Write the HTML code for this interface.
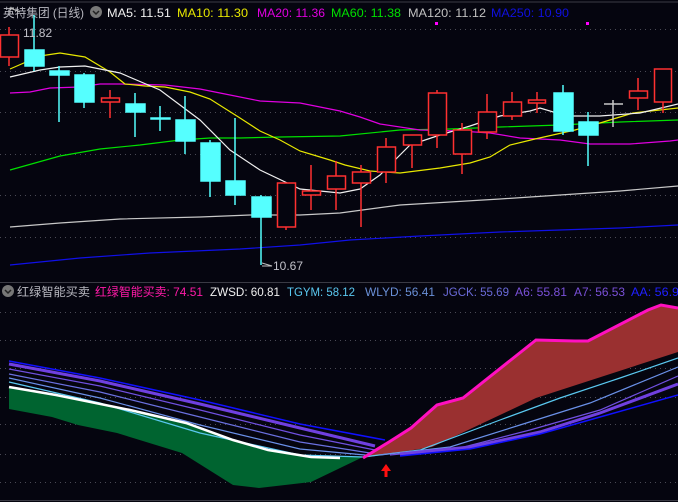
<!DOCTYPE html>
<html><head><meta charset="utf-8"><style>
html,body{margin:0;padding:0;background:#05050f;width:678px;height:502px;overflow:hidden}
svg{display:block}
text{font-family:"Liberation Sans","Noto Sans CJK SC",sans-serif;font-size:12px}
</style></head><body>
<svg width="678" height="502" viewBox="0 0 678 502" xmlns="http://www.w3.org/2000/svg">
<rect width="678" height="502" fill="#05050f"/>
<line x1="0" y1="2" x2="678" y2="2" stroke="#3a3a44" stroke-width="1"/>
<g stroke="#4a4a55" stroke-dasharray="1,4" stroke-width="1">
<line x1="0" y1="29.5" x2="678" y2="29.5"/><line x1="0" y1="71.5" x2="678" y2="71.5"/><line x1="0" y1="112.5" x2="678" y2="112.5"/><line x1="0" y1="154.5" x2="678" y2="154.5"/><line x1="0" y1="195.5" x2="678" y2="195.5"/><line x1="0" y1="237.5" x2="678" y2="237.5"/>
<line x1="0" y1="312.5" x2="678" y2="312.5"/><line x1="0" y1="340.5" x2="678" y2="340.5"/><line x1="0" y1="368.5" x2="678" y2="368.5"/><line x1="0" y1="397.5" x2="678" y2="397.5"/><line x1="0" y1="424.5" x2="678" y2="424.5"/><line x1="0" y1="454.5" x2="678" y2="454.5"/><line x1="0" y1="482.5" x2="678" y2="482.5"/>
</g>
<line x1="0" y1="282.5" x2="678" y2="282.5" stroke="#3a3a44"/>
<line x1="0" y1="500.5" x2="678" y2="500.5" stroke="#3a3a44"/>

<text x="3" y="17" fill="#b8b8c0" textLength="81" lengthAdjust="spacingAndGlyphs">英特集团 (日线)</text>
<circle cx="96" cy="12" r="6" fill="#777"/><path d="M93 11 L96 14 L99 11" stroke="#222" stroke-width="1.5" fill="none"/>
<text x="107" y="17" fill="#f0f0f0" textLength="64" lengthAdjust="spacingAndGlyphs">MA5: 11.51</text>
<text x="177" y="17" fill="#e8e800" textLength="71" lengthAdjust="spacingAndGlyphs">MA10: 11.30</text>
<text x="257" y="17" fill="#e000e0" textLength="68" lengthAdjust="spacingAndGlyphs">MA20: 11.36</text>
<text x="331" y="17" fill="#00e000" textLength="70" lengthAdjust="spacingAndGlyphs">MA60: 11.38</text>
<text x="408" y="17" fill="#c0c0c0" textLength="78" lengthAdjust="spacingAndGlyphs">MA120: 11.12</text>
<text x="491" y="17" fill="#1010e0" textLength="78" lengthAdjust="spacingAndGlyphs">MA250: 10.90</text>
<rect x="435" y="22" width="3" height="3" fill="#ff00ff"/><rect x="586" y="22" width="3" height="3" fill="#ff00ff"/>

<g fill="none" stroke-width="1.2">
<polyline stroke="#1010e8" points="10,265 80,258 150,253 240,249 300,245 350,240 420,236 500,232 560,230 620,228 678,225"/>
<polyline stroke="#c8c8c8" points="10,227 60,223 120,219 200,217 250,215 300,215 340,213 400,205 450,202 500,199 560,195 620,191 678,186"/>
<polyline stroke="#00e000" points="10,170 60,156 100,149 140,145 180,140 210,138 240,138 280,137 340,136 400,130 450,129 500,127 560,125 620,122 678,120"/>
<polyline stroke="#e000e0" points="10,93 30,92 50,88 80,87 100,84 120,84 165,85 200,89 220,93 260,101 300,103 340,111 360,117 380,124 420,130 460,131 490,133 520,138 560,140 590,144 630,144 670,141 678,140"/>
<polyline stroke="#e8e800" points="10,69 40,56 60,53 85,57 110,72 125,84 145,86 165,87 190,92 210,99 240,118 260,131 280,140 300,151 330,160 345,165 370,171 400,173 440,168 470,163 490,157 510,145 535,139 575,130 600,123 633,113 678,108"/>
<polyline stroke="#f0f0f0" points="10,77 40,70 60,67 85,66 120,73 160,90 200,120 230,150 260,170 300,189 340,193 360,189 380,175 410,145 440,135 470,126 500,116 530,111 540,108 560,114 570,116 600,116 640,113 678,104"/>
</g>

<g stroke="#ff3030" stroke-width="1.5" fill="#05050f">
<line x1="9" y1="27" x2="9" y2="66"/><rect x="0.5" y="35" width="18" height="22"/>
<line x1="110" y1="90" x2="110" y2="118"/><rect x="101.5" y="98" width="18" height="4"/>
<line x1="286" y1="183" x2="286" y2="230"/><rect x="277.5" y="183" width="18" height="44"/>
<line x1="311" y1="165" x2="311" y2="210"/><rect x="302.5" y="191" width="18" height="4"/>
<line x1="336" y1="161" x2="336" y2="210"/><rect x="327.5" y="176" width="18" height="13"/>
<line x1="361" y1="165" x2="361" y2="227"/><rect x="352.5" y="172" width="18" height="11"/>
<line x1="386" y1="138" x2="386" y2="183"/><rect x="377.5" y="147" width="18" height="25"/>
<line x1="412" y1="145" x2="412" y2="168"/><rect x="403.5" y="135" width="18" height="10"/>
<line x1="437" y1="90" x2="437" y2="148"/><rect x="428.5" y="93" width="18" height="42"/>
<line x1="462" y1="123" x2="462" y2="174"/><rect x="453.5" y="130" width="18" height="24"/>
<line x1="487" y1="94" x2="487" y2="139"/><rect x="478.5" y="112" width="18" height="20"/>
<line x1="512" y1="92" x2="512" y2="120"/><rect x="503.5" y="102" width="18" height="14"/>
<line x1="537" y1="92" x2="537" y2="113"/><rect x="528.5" y="100" width="17" height="3"/>
<line x1="638" y1="78" x2="638" y2="110"/><rect x="629.5" y="91" width="18" height="7"/>
<line x1="663" y1="69" x2="663" y2="113"/><rect x="654.5" y="69" width="17" height="33"/>
</g>
<g stroke="#55ffff" stroke-width="1.5" fill="#55ffff">
<line x1="34" y1="15" x2="34" y2="71"/><rect x="25" y="50" width="19" height="16"/>
<line x1="59" y1="66" x2="59" y2="122"/><rect x="50" y="71" width="19" height="4"/>
<line x1="84" y1="73" x2="84" y2="108"/><rect x="75" y="75" width="19" height="27"/>
<line x1="135" y1="93" x2="135" y2="137"/><rect x="126" y="104" width="19" height="8"/>
<line x1="160" y1="106" x2="160" y2="131"/><rect x="151" y="118" width="19" height="1"/>
<line x1="185" y1="96" x2="185" y2="154"/><rect x="176" y="120" width="19" height="21"/>
<line x1="210" y1="140" x2="210" y2="197"/><rect x="201" y="143" width="19" height="38"/>
<line x1="235" y1="118" x2="235" y2="205"/><rect x="226" y="181" width="19" height="14"/>
<line x1="261" y1="195" x2="261" y2="265"/><rect x="252" y="197" width="19" height="20"/>
<line x1="563" y1="85" x2="563" y2="135"/><rect x="554" y="93" width="19" height="38"/>
<line x1="588" y1="112" x2="588" y2="166"/><rect x="579" y="122" width="19" height="13"/>
</g>
<g stroke="#c8c8c8" stroke-width="1.5"><line x1="613" y1="100" x2="613" y2="127"/><line x1="604" y1="104" x2="623" y2="104"/></g>

<g stroke="#c0c0c0" fill="none" stroke-width="1"><path d="M10 14 L10 8 L14 8 M10 8 L20 12"/><path d="M262 263 L272 266 L262 266"/></g>
<text x="23" y="37" fill="#c0c0c8">11.82</text>
<text x="273" y="270" fill="#c0c0c8">10.67</text>

<circle cx="8" cy="291" r="6" fill="#777"/><path d="M5 290 L8 293 L11 290" stroke="#222" stroke-width="1.5" fill="none"/>
<text x="17" y="296" fill="#b8b8c0" textLength="73" lengthAdjust="spacingAndGlyphs">红绿智能买卖</text>
<text x="95" y="296" fill="#ff1aa8" textLength="108" lengthAdjust="spacingAndGlyphs">红绿智能买卖: 74.51</text>
<text x="210" y="296" fill="#f0f0f0" textLength="70" lengthAdjust="spacingAndGlyphs">ZWSD: 60.81</text>
<text x="287" y="296" fill="#5ac8f0" textLength="68" lengthAdjust="spacingAndGlyphs">TGYM: 58.12</text>
<text x="365" y="296" fill="#6a90d8" textLength="70" lengthAdjust="spacingAndGlyphs">WLYD: 56.41</text>
<text x="443" y="296" fill="#6a6ad8" textLength="66" lengthAdjust="spacingAndGlyphs">JGCK: 55.69</text>
<text x="515" y="296" fill="#7a50d8" textLength="52" lengthAdjust="spacingAndGlyphs">A6: 55.81</text>
<text x="574" y="296" fill="#7a50d8" textLength="51" lengthAdjust="spacingAndGlyphs">A7: 56.53</text>
<text x="631" y="296" fill="#2020ff" textLength="48" lengthAdjust="spacingAndGlyphs">AA: 56.9</text>

<polygon fill="#006430" points="9,387 56,395 130,410 186,423 233,440 268,450 311,457 363,457 311,482 259,488 233,485 182,453 117,433 78,425 52,417 9,409"/>
<polygon fill="#9a3030" points="363,458 389,442 411,428 437,405 463,398 536,340 575,341 588,341 648,310 661,305 678,308 678,352 536,398 432,447"/>
<g fill="none">
<polyline stroke="#1010ff" stroke-width="1.5" points="9,361 100,378 200,400 300,424 385,440"/>
<polyline stroke="#7040e0" stroke-width="3" points="9,364 100,381 200,404 300,428 375,446"/>
<polyline stroke="#7050e0" stroke-width="1.2" points="9,369 100,386 200,410 300,435 375,450"/>
<polyline stroke="#6a70e0" stroke-width="1.2" points="9,374 100,392 200,417 300,442 370,453"/>
<polyline stroke="#6a90e8" stroke-width="1.2" points="9,378 100,398 200,425 300,449 365,455"/>
<polyline stroke="#5ac8f0" stroke-width="1.2" points="9,382 100,403 200,433 300,455 363,457"/>
<polyline stroke="#ffffff" stroke-width="2.5" points="9,387 56,395 130,410 186,423 233,440 268,450 311,457 340,458"/>
<polyline stroke="#5ac8f0" stroke-width="1.2" points="363,457 420,450 500,420 560,398 620,378 678,358"/>
<polyline stroke="#6a90e8" stroke-width="1.2" points="380,455 450,447 520,425 590,403 678,367"/>
<polyline stroke="#7050e0" stroke-width="1.2" points="390,455 460,448 530,430 600,410 678,376"/>
<polyline stroke="#7040e0" stroke-width="3" points="400,454 470,447 540,432 600,413 678,384"/>
<polyline stroke="#1010ff" stroke-width="1.5" points="400,456 470,449 540,434 600,417 678,395"/>
<polyline stroke="#ff10c0" stroke-width="3" points="363,458 389,442 411,428 437,405 463,398 536,340 575,341 588,341 648,310 661,305 678,308"/>
</g>
<path d="M386 464 L381 471 L384.5 471 L384.5 477 L387.5 477 L387.5 471 L391 471 Z" fill="#ff1010"/>
</svg>
</body></html>
